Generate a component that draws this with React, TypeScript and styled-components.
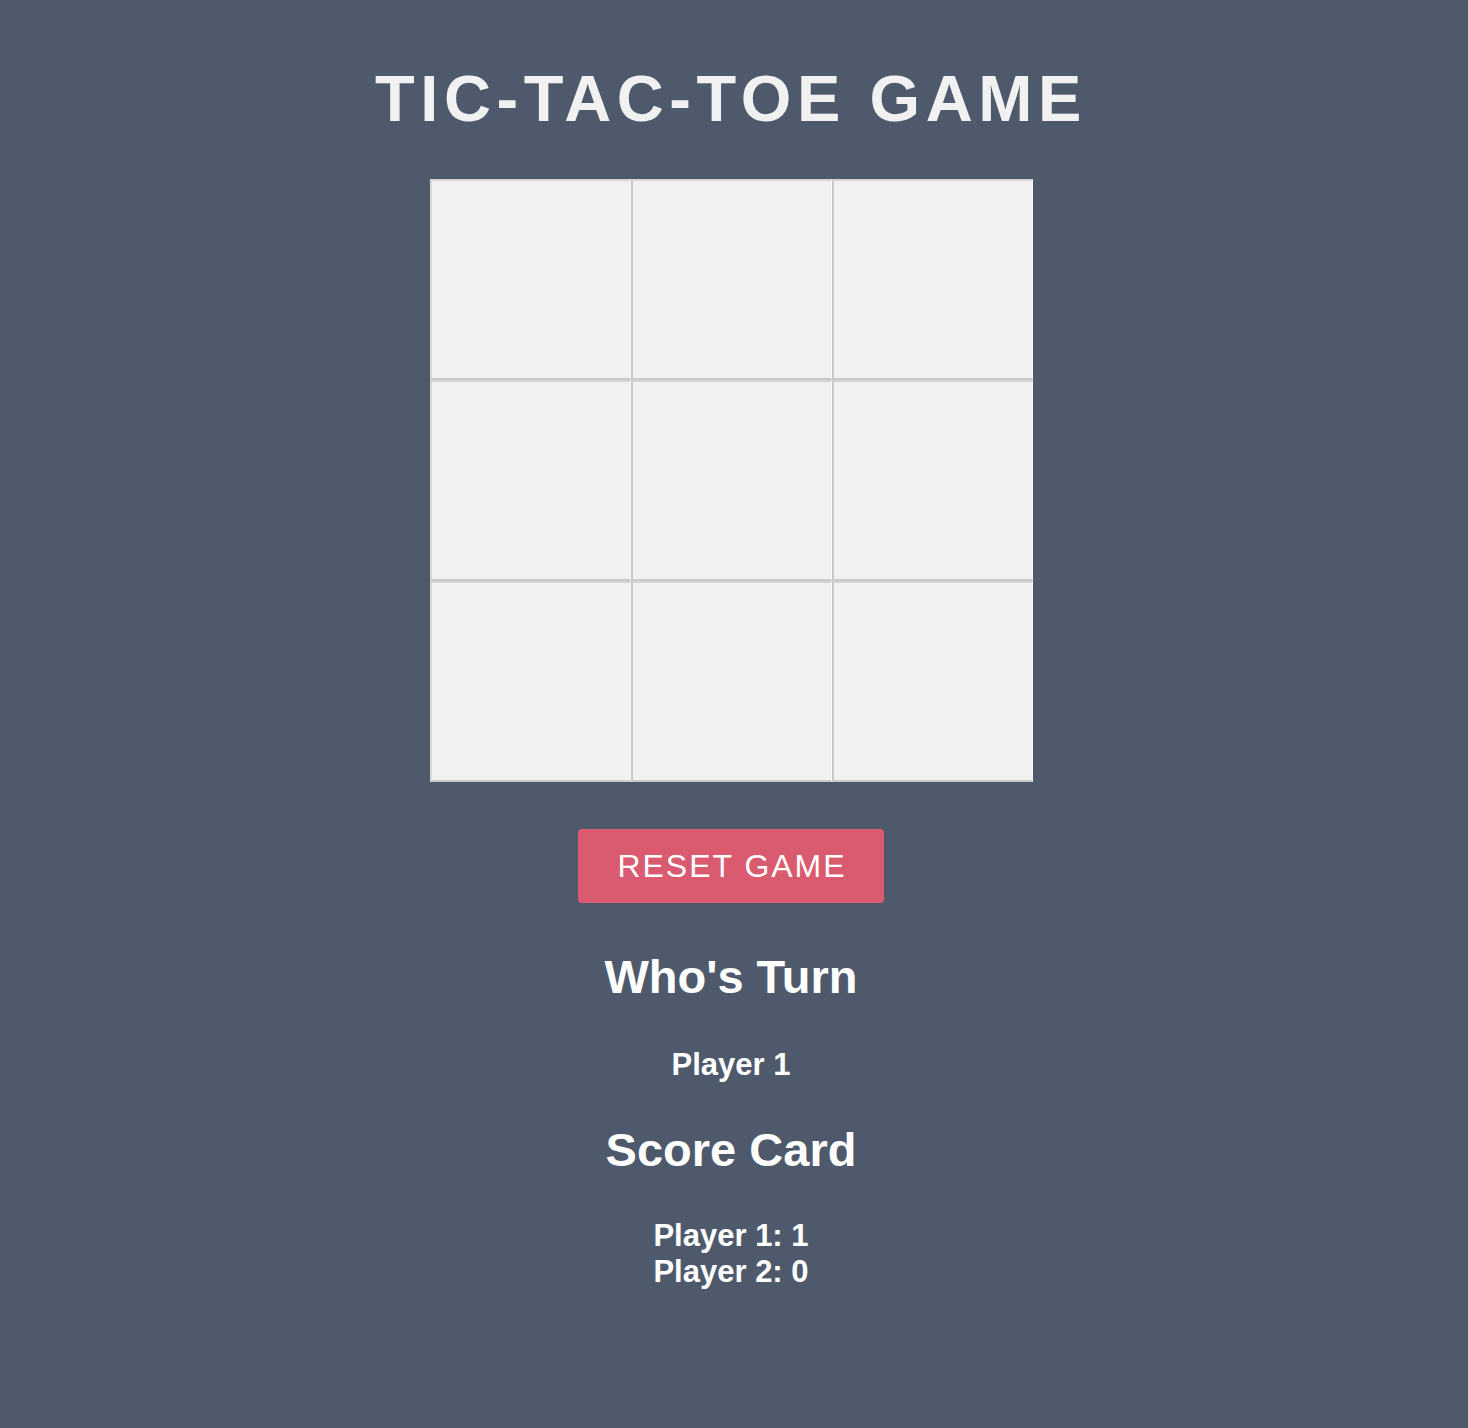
import React, { useState } from "react";
import styled, { createGlobalStyle } from "styled-components";

const GlobalStyle = createGlobalStyle`
  html, body {
    margin: 0;
    padding: 0;
    background: #4e5a6c;
  }
  body {
    font-family: "Liberation Sans", Arial, Helvetica, sans-serif;
  }
`;

const Page = styled.main`
  min-height: 1428px;
  background: #4e5a6c;
  display: flex;
  flex-direction: column;
  align-items: center;
  padding-top: 66px;
  padding-right: 6px;
  box-sizing: border-box;
`;

const Title = styled.h1`
  margin: 0;
  font-size: 65px;
  line-height: 1;
  font-weight: 700;
  letter-spacing: 5.6px;
  color: #f1f1f1;
  text-transform: uppercase;
`;

const Board = styled.div`
  margin-top: 48px;
  display: grid;
  grid-template-columns: repeat(3, 201px);
  grid-template-rows: repeat(3, 201px);
  background: #f1f1f1;
`;

const Cell = styled.button<{ $first: boolean }>`
  box-sizing: border-box;
  width: 201px;
  height: 201px;
  padding: 0;
  margin: 0;
  background: #f1f1f1;
  border-style: solid;
  border-width: 2px 1px 2px 2px;
  border-color: #d4d4d4 #f7f7f7 #c9c9c9 ${(p) => (p.$first ? "#d8d8d8" : "#c9c9c9")};
  font-family: inherit;
  font-size: 90px;
  font-weight: 700;
  color: #4e5a6c;
  cursor: pointer;
`;

const ResetButton = styled.button`
  margin-top: 47px;
  width: 306px;
  height: 74px;
  display: flex;
  align-items: center;
  justify-content: center;
  background: #da5a6f;
  color: #ffffff;
  border: none;
  border-radius: 4px;
  font-family: inherit;
  font-size: 32px;
  line-height: 1;
  font-weight: 400;
  letter-spacing: 2px;
  padding: 0 0 0 2px;
  cursor: pointer;
`;

const Heading = styled.h2<{ $gap: number }>`
  margin: ${(p) => p.$gap}px 0 0;
  font-size: 47px;
  line-height: 1;
  font-weight: 700;
  color: #ffffff;
`;

const Info = styled.div<{ $gap: number }>`
  margin-top: ${(p) => p.$gap}px;
  font-size: 31px;
  line-height: 36px;
  font-weight: 700;
  color: #ffffff;
  text-align: center;
`;

export default function App() {
  const [cells, setCells] = useState<string[]>(Array(9).fill(""));
  const [player, setPlayer] = useState(1);
  const scores = { p1: 1, p2: 0 };

  const play = (i: number) => {
    if (cells[i]) return;
    const next = [...cells];
    next[i] = player === 1 ? "X" : "O";
    setCells(next);
    setPlayer(player === 1 ? 2 : 1);
  };

  return (
    <>
      <GlobalStyle />
      <Page>
        <Title>Tic-Tac-Toe Game</Title>
        <Board>
          {cells.map((c, i) => (
            <Cell key={i} $first={i % 3 === 0} onClick={() => play(i)}>
              {c}
            </Cell>
          ))}
        </Board>
        <ResetButton
          onClick={() => {
            setCells(Array(9).fill(""));
            setPlayer(1);
          }}
        >
          RESET GAME
        </ResetButton>
        <Heading $gap={50}>Who's Turn</Heading>
        <Info $gap={47}>Player {player}</Info>
        <Heading $gap={43}>Score Card</Heading>
        <Info $gap={45}>
          <div>Player 1: {scores.p1}</div>
          <div>Player 2: {scores.p2}</div>
        </Info>
      </Page>
    </>
  );
}
